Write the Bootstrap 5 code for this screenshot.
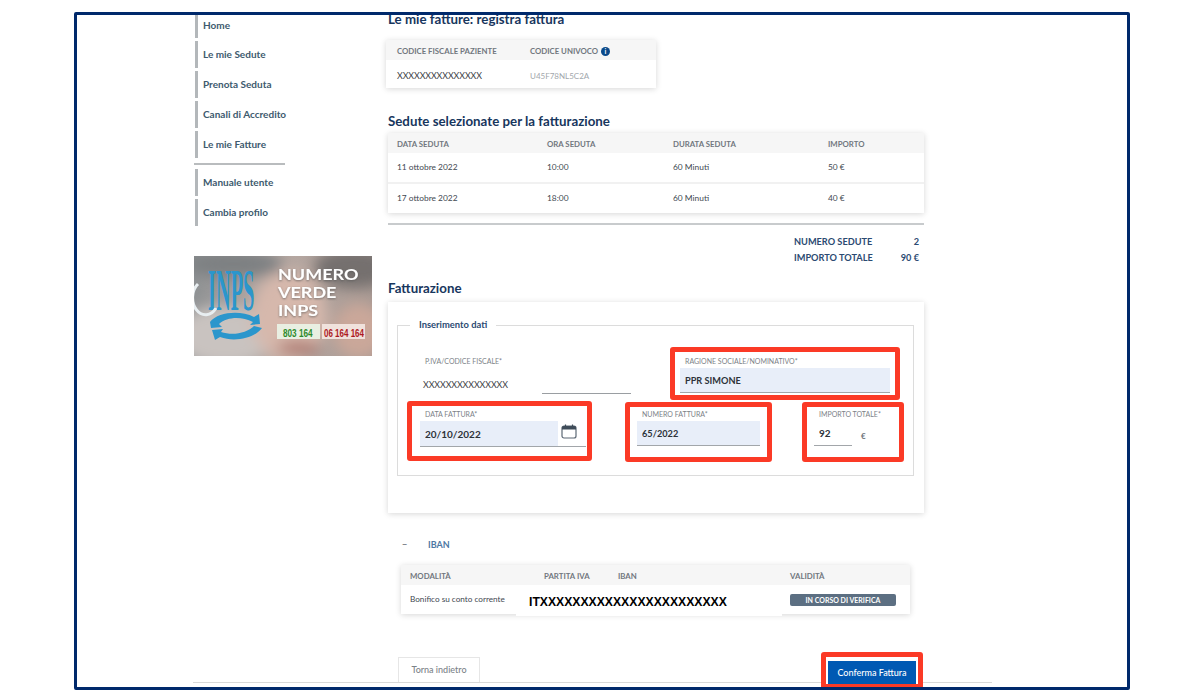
<!DOCTYPE html>
<html lang="it">
<head>
    <meta charset="utf-8" />
    <title>Le mie fatture: registra fattura</title>
    <link href="https://cdn.jsdelivr.net/npm/bootstrap@5.3.2/dist/css/bootstrap.min.css" rel="stylesheet">
    <style>
        html, body { height: 694px; overflow: hidden; background: #fff; }
        body { font-family: Lato, "Liberation Sans", sans-serif; color: #3f4650; }

        .cornice { position: relative; width: 1056px; height: 678px; margin: 12px 0 0 74px; border: 3px solid #00296b; border-radius: 2px; overflow: hidden; background: #fff; }
        .impianto { padding-left: 117px; }

        /* menu laterale */
        .laterale { width: 178px; flex: none; margin-right: 16px; }
        .voce { display: flex; align-items: center; height: 27px; margin-bottom: 3px; padding-left: 5px; border-left: 3px solid #b3b7ba; margin-left: 1px; font-size: 10px; font-weight: 700; color: #3d5a6e; text-decoration: none; }
        .voce-prima { height: 23px; padding-bottom: 3px; }
        .separatore { width: 91px; height: 2px; margin: 5px 0 4px; background: #b9bcbe; }
        .banner { display: block; width: 178px; height: 100px; margin-top: 30px; }

        /* colonna centrale */
        .centrale { width: 536px; flex: none; }
        .titolo { margin: 0; font-size: 13.3px; font-weight: 700; line-height: 16px; color: #17365d; }
        .titolo-primo { margin-top: -4px; }
        .scheda { background: #fff; box-shadow: 0 1px 6px rgba(0, 0, 0, .16); }
        .griglia { table-layout: fixed; width: 100%; margin: 0; font-size: 8.4px; }
        .griglia th { height: 20px; padding: 3px 0 0 9px; background: #f6f6f6; border: 0; font-size: 7.8px; font-weight: 700; color: #71777e; vertical-align: middle; white-space: nowrap; }
        .griglia td { padding: 0 0 0 9px; border: 0; background: #fff; color: #414851; vertical-align: middle; white-space: nowrap; }
        .griglia .riga-sep td { border-top: 2px solid #f1f1f1; }
        .scheda-cf { width: 270px; margin: 13px 0 0 -2px; }
        .scheda-cf td { height: 28px; padding-top: 3px; }
        .scheda-cf th:first-child, .scheda-cf td:first-child { padding-left: 11px; }
        .mascherato { font-size: 8.9px; color: #3b4045; letter-spacing: -.1px; }
        .griglia .tenue { color: #a2a7ac; font-size: 8px; }
        .info { display: inline-block; width: 9px; height: 9px; margin-left: 1px; border-radius: 50%; background: #0b4a8a; color: #fff; font-size: 7px; line-height: 9px; text-align: center; vertical-align: 0; }
        .titolo-sedute { margin-top: 25px; }
        .scheda-sedute { margin-top: 4px; }
        .scheda-sedute td { height: 30px; }
        .linea-totali { height: 2px; margin-top: 10px; background: #c8cbcd; }
        .totali { display: grid; grid-template-columns: 84px 41px; justify-content: end; padding: 9px 5px 0 0; font-size: 9.2px; line-height: 16px; font-weight: 700; color: #2b4a72; white-space: nowrap; }
        .totali span:nth-child(even) { text-align: right; }
        .titolo-fatt { margin-top: 14px; }

        /* fatturazione */
        .scheda-fatt { height: 211px; margin-top: 6px; padding: 17px 10px 0 9px; }
        .gruppo { height: 157px; margin: 0; padding: 0; border: 1px solid #dcdcdc; }
        .gruppo legend { float: none; width: auto; margin: 0 0 0 12px; padding: 0 9px; font-size: 9.4px; line-height: 12px; font-weight: 700; color: #2b4a72; }
        .riga-campi { display: flex; align-items: flex-start; }
        .riga-uno { height: 70px; padding-top: 16px; }
        .etichetta { display: block; font-size: 7px; line-height: 10px; color: #7c8288; white-space: nowrap; }
        .campo-piva { position: relative; width: 272px; padding-left: 27px; padding-top: 9px; }
        .campo-piva .mascherato { display: block; margin: 12px 0 0 -2px; line-height: 14px; }
        .tratto { position: absolute; left: 144px; top: 46px; width: 89px; height: 1px; background: #9a9ea2; }
        .rosso { flex: none; border: 5px solid #fb3a26; border-radius: 3px; background: #fff; }
        .rosso-ragione { width: 230px; height: 53px; padding: 4px 5px 0; }
        .rosso-data { width: 185px; height: 60px; margin: 0 33px 0 9px; padding: 3px 1px 0 8px; }
        .rosso-numero { width: 147px; height: 60px; margin: 1px 30px 0 0; padding: 2px 7px 0 7px; }
        .rosso-importo { width: 102px; height: 60px; margin-top: 1px; padding: 2px 0 0 7px; }
        .rosso .etichetta { padding-left: 5px; margin-bottom: 2px; }
        .compilato { display: block; width: 100%; height: 25px; padding: 0 5px; border: 0; border-bottom: 1px solid #a2a6aa; border-radius: 0; background: #e8eef9; font-family: inherit; font-size: 9.2px; font-weight: 700; color: #2d333a; outline: 0; }
        .con-icona { display: flex; align-items: center; border-bottom: 1px solid #a2a6aa; }
        .con-icona .compilato { width: 138px; border-bottom: 0; font-size: 10px; }
        .con-icona svg { margin: 0 0 5px 3px; }
        .con-euro { display: flex; align-items: center; }
        .con-euro .compilato { width: 38px; background: #fff; font-size: 10px; }
        .con-euro span { margin: 4px 0 0 9px; font-size: 8px; font-weight: 700; color: #6d7379; }

        /* iban */
        .apri-iban { display: flex; align-items: center; height: 16px; margin: 24px 0 0 14px; font-size: 9px; color: #4d77a3; font-weight: 700; }
        .apri-iban b { width: 26px; color: #7b8187; font-weight: 700; }
        .scheda-iban { position: relative; width: 509px; margin: 12px 0 0 13px; }
        .scheda-iban td { height: 29px; font-size: 8.2px; }
        .iban-bianco { position: absolute; left: 115px; top: 20px; width: 266px; height: 31px; padding: 7px 0 0 13px; background: #fff; font-family: "Liberation Sans", Arial, sans-serif; font-size: 12.2px; font-weight: 700; line-height: 20px; color: #000; white-space: nowrap; }
        .stato { display: block; width: 106px; height: 12px; border-radius: 2px; background: #5c6f82; color: #fff; font-size: 7px; font-weight: 700; line-height: 12px; text-align: center; position: relative; }

        /* pulsanti */
        .pulsanti { display: flex; justify-content: space-between; align-items: flex-start; margin-top: 38px; }
        .btn-torna { width: 82px; height: 25px; margin: 5px 0 0 10px; padding: 0; border: 1px solid #e6e6e6; border-bottom: 0; border-radius: 0; font-size: 9px; font-weight: 500; color: #7c8288; background: #fff; }
        .rosso-conferma { position: relative; z-index: 1; width: 102px; height: 37px; margin-right: 1px; padding: 2px; }
        .btn-conferma { width: 88px; height: 23px; padding: 0; border: 0; border-radius: 0; background: #0059b3; color: #fff; font-size: 9px; font-weight: 500; }
        .linea-fondo { position: absolute; left: 116px; top: 667px; width: 799px; height: 1px; background: #d9d9d9; }
    </style>
</head>
<body>

    <div class="cornice">
        <div class="impianto d-flex">

            <!-- Menu -->
            <nav class="laterale">
                <a class="voce voce-prima" href="#">Home</a>
                <a class="voce" href="#">Le mie Sedute</a>
                <a class="voce" href="#">Prenota Seduta</a>
                <a class="voce" href="#">Canali di Accredito</a>
                <a class="voce" href="#">Le mie Fatture</a>
                <div class="separatore"></div>
                <a class="voce" href="#">Manuale utente</a>
                <a class="voce" href="#">Cambia profilo</a>

                <svg class="banner" viewBox="0 0 178 100" role="img" aria-label="Numero verde INPS">
                    <defs>
                        <linearGradient id="fondo" x1="0" y1="0" x2="1" y2="0">
                            <stop offset="0" stop-color="#8f9294" />
                            <stop offset=".45" stop-color="#b8aaa4" />
                            <stop offset="1" stop-color="#a89a94" />
                        </linearGradient>
                        <filter id="sfoca" x="-30%" y="-30%" width="160%" height="160%"><feGaussianBlur stdDeviation="7" /></filter>
                        <filter id="ombra" x="-10%" y="-10%" width="120%" height="120%"><feDropShadow dx="0" dy="1" stdDeviation="1" flood-color="#555" flood-opacity=".7" /></filter>
                    </defs>
                    <rect width="178" height="100" fill="url(#fondo)" />
                    <g filter="url(#sfoca)">
                        <ellipse cx="30" cy="80" rx="50" ry="30" fill="#c9c3c0" />
                        <ellipse cx="95" cy="60" rx="38" ry="45" fill="#d6b8ac" />
                        <ellipse cx="160" cy="12" rx="40" ry="20" fill="#74706e" />
                        <ellipse cx="165" cy="75" rx="26" ry="28" fill="#caa79a" />
                        <ellipse cx="40" cy="8" rx="50" ry="14" fill="#7d8082" />
                        <ellipse cx="105" cy="92" rx="22" ry="6" fill="#a86f68" />
                    </g>
                    <text transform="translate(14 54) scale(.34 1)" font-family="Liberation Serif, serif" font-size="60" font-weight="700" fill="#2b96cc">INPS</text>
                    <path d="M4 28a13 17 0 1 0 18 24" fill="none" stroke="#e8eef1" stroke-width="3" />
                    <path d="M16 66c8-10 30-12 44-5l5-3 1 10-10 1 3-3c-12-6-26-5-34 2l3 3-11 1z M68 72c-6 9-26 15-42 9l-5 3-3-10 11-1-2 3c12 4 26 1 33-6z" fill="#2b96cc" />
                    <g font-family="Lato, sans-serif" font-size="14.500" font-weight="700" fill="#fff" filter="url(#ombra)">
                        <text transform="translate(84 24) scale(1.24 1)">NUMERO</text>
                        <text transform="translate(84 42) scale(1.24 1)">VERDE</text>
                        <text transform="translate(84 60) scale(1.24 1)">INPS</text>
                    </g>
                    <rect x="83" y="68" width="43" height="15" fill="#e9efe2" />
                    <rect x="128" y="68" width="43" height="15" fill="#f0e2dc" />
                    <g font-family="Liberation Sans, sans-serif" font-size="10" font-weight="700">
                        <text transform="translate(89 81) scale(.82 1)" fill="#2c8a2b">803 164</text>
                        <text transform="translate(130 81) scale(.8 1)" fill="#ad1a1f">06 164 164</text>
                    </g>
                </svg>
            </nav>

            <!-- Contenuto -->
            <main class="centrale">
                <h1 class="titolo titolo-primo">Le mie fatture: registra fattura</h1>

                <div class="scheda scheda-cf">
                    <table class="table griglia">
                        <colgroup><col style="width:135px"><col></colgroup>
                        <thead>
                            <tr><th>CODICE FISCALE PAZIENTE</th><th>CODICE UNIVOCO <span class="info">i</span></th></tr>
                        </thead>
                        <tbody>
                            <tr><td><span class="mascherato">XXXXXXXXXXXXXXX</span></td><td class="tenue">U45F78NL5C2A</td></tr>
                        </tbody>
                    </table>
                </div>

                <h2 class="titolo titolo-sedute">Sedute selezionate per la fatturazione</h2>
                <div class="scheda scheda-sedute">
                    <table class="table griglia">
                        <colgroup><col style="width:150px"><col style="width:126px"><col style="width:155px"><col></colgroup>
                        <thead>
                            <tr><th>DATA SEDUTA</th><th>ORA SEDUTA</th><th>DURATA SEDUTA</th><th>IMPORTO</th></tr>
                        </thead>
                        <tbody>
                            <tr><td>11 ottobre 2022</td><td>10:00</td><td>60 Minuti</td><td>50 €</td></tr>
                            <tr class="riga-sep"><td>17 ottobre 2022</td><td>18:00</td><td>60 Minuti</td><td>40 €</td></tr>
                        </tbody>
                    </table>
                </div>
                <div class="linea-totali"></div>
                <div class="totali">
                    <span>NUMERO SEDUTE</span><span>2</span>
                    <span>IMPORTO TOTALE</span><span>90 €</span>
                </div>

                <h2 class="titolo titolo-fatt">Fatturazione</h2>
                <div class="scheda scheda-fatt">
                    <fieldset class="gruppo">
                        <legend>Inserimento dati</legend>
                        <div class="riga-campi riga-uno">
                            <div class="campo-piva">
                                <span class="etichetta">P.IVA/CODICE FISCALE*</span>
                                <span class="mascherato">XXXXXXXXXXXXXXX</span>
                                <span class="tratto"></span>
                            </div>
                            <div class="rosso rosso-ragione">
                                <label class="etichetta">RAGIONE SOCIALE/NOMINATIVO*</label>
                                <input class="compilato" value="PPR SIMONE">
                            </div>
                        </div>
                        <div class="riga-campi">
                            <div class="rosso rosso-data">
                                <label class="etichetta">DATA FATTURA*</label>
                                <div class="con-icona">
                                    <input class="compilato" value="20/10/2022">
                                    <svg width="16" height="15" viewBox="0 0 16 15">
                                        <rect x="1" y="2" width="14" height="12" rx="2" fill="none" stroke="#5d6975" stroke-width="1.2" />
                                        <path d="M1 3.500a1.500 1.500 0 0 1 1.500-1.500h11a1.500 1.500 0 0 1 1.500 1.500v2h-14z" fill="#3f4c59" />
                                        <path d="M4.500.5v2.500M11.500.5v2.500" stroke="#3f4c59" stroke-width="1.200" />
                                    </svg>
                                </div>
                            </div>
                            <div class="rosso rosso-numero">
                                <label class="etichetta">NUMERO FATTURA*</label>
                                <input class="compilato" value="65/2022">
                            </div>
                            <div class="rosso rosso-importo">
                                <label class="etichetta">IMPORTO TOTALE*</label>
                                <div class="con-euro">
                                    <input class="compilato" value="92">
                                    <span>€</span>
                                </div>
                            </div>
                        </div>
                    </fieldset>
                </div>

                <div class="apri-iban"><b>−</b>IBAN</div>
                <div class="scheda scheda-iban">
                    <table class="table griglia">
                        <colgroup><col style="width:134px"><col style="width:74px"><col style="width:172px"><col></colgroup>
                        <thead>
                            <tr><th>MODALITÀ</th><th>PARTITA IVA</th><th>IBAN</th><th>VALIDITÀ</th></tr>
                        </thead>
                        <tbody>
                            <tr><td>Bonifico su conto corrente</td><td></td><td></td><td><span class="stato">IN CORSO DI VERIFICA</span></td></tr>
                        </tbody>
                    </table>
                    <div class="iban-bianco">ITXXXXXXXXXXXXXXXXXXXXXXX</div>
                </div>

                <div class="pulsanti">
                    <button type="button" class="btn btn-torna">Torna indietro</button>
                    <div class="rosso rosso-conferma"><button type="button" class="btn btn-conferma">Conferma Fattura</button></div>
                </div>
            </main>
        </div>
        <div class="linea-fondo"></div>
    </div>

    <script src="https://cdn.jsdelivr.net/npm/bootstrap@5.3.2/dist/js/bootstrap.bundle.min.js"></script>
</body>
</html>
